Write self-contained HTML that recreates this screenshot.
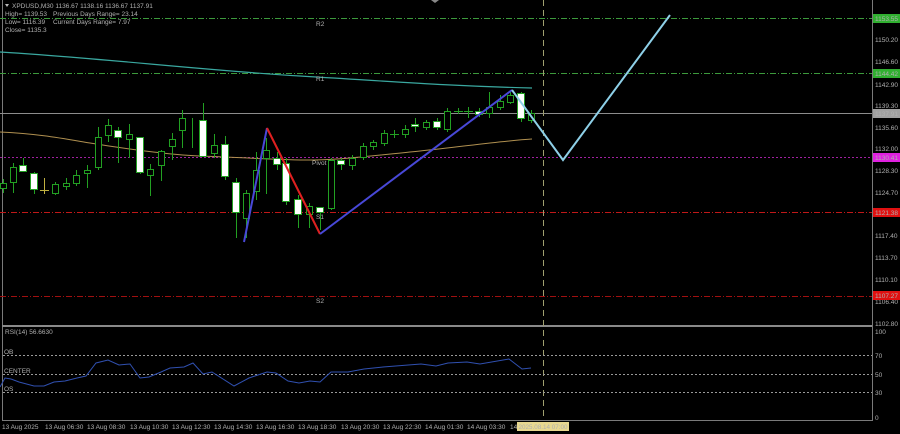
<!DOCTYPE html>
<html><head><meta charset="utf-8"><style>
html,body{margin:0;padding:0;background:#000;width:900px;height:434px;overflow:hidden}
svg{display:block}
text{font-family:"Liberation Sans",sans-serif;font-size:6.5px;fill:#b0b0b0}
</style></head><body>
<svg width="900" height="434" viewBox="0 0 900 434" xmlns="http://www.w3.org/2000/svg">
<rect width="900" height="434" fill="#000"/>
<path d="M2.5 0V420.5H872.5V0" fill="none" stroke="#7a7a7a" stroke-width="1"/>
<line x1="2" y1="326" x2="872" y2="326" stroke="#8a8a8a" stroke-width="2"/>
<line x1="0" y1="18.5" x2="872" y2="18.5" stroke="#3c9a3c" stroke-dasharray="6,2,1,2"/>
<line x1="0" y1="73.5" x2="872" y2="73.5" stroke="#3c9a3c" stroke-dasharray="6,2,1,2"/>
<line x1="0" y1="113.5" x2="872" y2="113.5" stroke="#8c8c8c"/>
<line x1="0" y1="157.5" x2="872" y2="157.5" stroke="#a020a0" stroke-dasharray="2,2"/>
<line x1="0" y1="212.5" x2="872" y2="212.5" stroke="#c01818" stroke-dasharray="6,2,1,2"/>
<line x1="0" y1="296.5" x2="872" y2="296.5" stroke="#a01010" stroke-dasharray="6,2,1,2"/>
<line x1="543.5" y1="0" x2="543.5" y2="420" stroke="#a0a070" stroke-dasharray="6,4"/>
<path d="M0 52 C100 58 200 70 300 76 S450 86 532 88" fill="none" stroke="#3aa8a0" stroke-width="1.2"/>
<path d="M0 132 C40 134 60 138 90 143 S170 155 200 156 S280 160 310 160 S380 155 420 151 S500 141 532 139" fill="none" stroke="#b09050" stroke-width="1"/>
<path stroke="#22a022" stroke-width="1" fill="none" d="M3.5 179V193M13.5 163V193M23.5 158V172M34.5 172V194M55.5 182V195M66.5 178V190M76.5 170V186M87.5 165V188M98.5 127V170M108.5 119V142M118.5 127V163M129.5 124V158M140.5 137V174M150.5 164V196M161.5 150V181M172.5 133V160M182.5 110V148M192.5 118V148M203.5 103V156M214.5 134V158M225.5 136V180M236.5 178V238M246.5 190V238M256.5 152V200M266.5 138V194M277.5 152V170M286.5 158V205M298.5 195V228M309.5 203V228M320.5 207V230M331.5 158V210M341.5 158V170M352.5 155V170M363.5 143V160M373.5 140V150M384.5 130V146M394.5 130V138M405.5 125V138M415.5 118V132M426.5 120V130M437.5 118V130M447.5 108V132M458.5 108V114M468.5 107V118M479.5 108V117M489.5 92V118M500.5 95V110M510.5 90V104M521.5 92V122M531.5 110V123"/>
<line x1="44.5" y1="178" x2="44.5" y2="194" stroke="#c0b040"/><line x1="40" y1="190.5" x2="49" y2="190.5" stroke="#c0b040"/>
<g fill="#000" stroke="#22a022" stroke-width="1">
<rect x="0.5" y="183.5" width="6" height="5"/><rect x="10.5" y="167.5" width="6" height="15"/><rect x="52.5" y="184.5" width="6" height="9"/><rect x="63.5" y="183.5" width="6" height="3"/><rect x="73.5" y="175.5" width="6" height="8"/><rect x="84.5" y="170.5" width="6" height="3"/><rect x="95.5" y="137.5" width="6" height="30"/><rect x="105.5" y="125.5" width="6" height="10"/><rect x="126.5" y="134.5" width="6" height="5"/><rect x="147.5" y="169.5" width="6" height="6"/><rect x="158.5" y="151.5" width="6" height="14"/><rect x="169.5" y="139.5" width="6" height="7"/><rect x="179.5" y="118.5" width="6" height="12"/><rect x="211.5" y="145.5" width="6" height="8"/><rect x="243.5" y="193.5" width="6" height="25"/><rect x="253.5" y="170.5" width="6" height="21"/><rect x="263.5" y="150.5" width="6" height="8"/><rect x="306.5" y="206.5" width="6" height="8"/><rect x="328.5" y="160.5" width="6" height="48"/><rect x="349.5" y="158.5" width="6" height="7"/><rect x="360.5" y="146.5" width="6" height="11"/><rect x="370.5" y="142.5" width="6" height="4"/><rect x="381.5" y="133.5" width="6" height="10"/><rect x="402.5" y="129.5" width="6" height="5"/><rect x="423.5" y="122.5" width="6" height="5"/><rect x="444.5" y="111.5" width="6" height="18"/><rect x="486.5" y="107.5" width="6" height="6"/><rect x="497.5" y="101.5" width="6" height="6"/><rect x="507.5" y="95.5" width="6" height="7"/><rect x="528.5" y="113.5" width="6" height="7"/>
</g>
<g fill="#fff" stroke="#22a022" stroke-width="1">
<rect x="19.5" y="165.5" width="7" height="6"/><rect x="30.5" y="173.5" width="7" height="16"/><rect x="114.5" y="130.5" width="7" height="7"/><rect x="136.5" y="137.5" width="7" height="35"/><rect x="199.5" y="120.5" width="7" height="36"/><rect x="221.5" y="144.5" width="7" height="32"/><rect x="232.5" y="182.5" width="7" height="30"/><rect x="273.5" y="158.5" width="7" height="6"/><rect x="282.5" y="163.5" width="7" height="38"/><rect x="294.5" y="199.5" width="7" height="15"/><rect x="316.5" y="207.5" width="7" height="5"/><rect x="337.5" y="160.5" width="7" height="4"/><rect x="411.5" y="124.5" width="7" height="2"/><rect x="433.5" y="121.5" width="7" height="6"/><rect x="475.5" y="111.5" width="7" height="3"/><rect x="517.5" y="93.5" width="7" height="25"/>
</g>
<g stroke="#22a022"><line x1="390" y1="134.5" x2="399" y2="134.5"/><line x1="454" y1="111.5" x2="463" y2="111.5"/><line x1="464" y1="111.5" x2="473" y2="111.5"/></g>
<polyline points="244,242 267,128" fill="none" stroke="#4848d8" stroke-width="2"/>
<polyline points="267,128 320,234" fill="none" stroke="#e02020" stroke-width="2"/>
<polyline points="320,234 512,90" fill="none" stroke="#4848d8" stroke-width="2"/>
<polyline points="512,90 563,160 670,15" fill="none" stroke="#8ed0e8" stroke-width="2"/>
<text x="316" y="26" fill="#ddd">R2</text><text x="316" y="81" fill="#ddd">R1</text><text x="312" y="165" fill="#ddd">Pivot</text><text x="316" y="219" fill="#ddd">S1</text><text x="316" y="303" fill="#ddd">S2</text>
<path d="M5 4L9 4L7 7Z" fill="#bbb"/>
<path d="M431 0L439 0L435 3Z" fill="#888"/>
<text x="12" y="8">XPDUSD,M30  1136.67 1138.16 1136.67 1137.91</text>
<text x="5" y="16">High= 1139.53</text><text x="53" y="16">Previous Days Range= 23.14</text>
<text x="5" y="24">Low= 1116.39</text><text x="53" y="24">Current Days Range= 7.97</text>
<text x="5" y="32">Close= 1135.3</text>
<g>
<text x="875" y="42">1150.20</text><text x="875" y="64">1146.60</text><text x="875" y="87">1142.90</text><text x="875" y="108">1139.30</text><text x="875" y="130">1135.60</text><text x="875" y="151">1132.00</text><text x="875" y="173">1128.30</text><text x="875" y="195">1124.70</text><text x="875" y="238">1117.40</text><text x="875" y="260">1113.70</text><text x="875" y="282">1110.10</text><text x="875" y="304">1106.40</text><text x="875" y="326">1102.80</text>
</g>
<rect x="873" y="14" width="27" height="9" fill="#30b030"/><text x="875" y="21" fill="#111">1153.55</text>
<rect x="873" y="69" width="27" height="9" fill="#30b030"/><text x="875" y="76" fill="#111">1144.42</text>
<rect x="873" y="109" width="27" height="9" fill="#a0a0a0"/><text x="875" y="116" fill="#111">1137.91</text>
<rect x="873" y="153" width="27" height="9" fill="#e020e0"/><text x="875" y="160" fill="#800080">1130.41</text>
<rect x="873" y="208" width="27" height="9" fill="#e01010"/><text x="875" y="215" fill="#800000">1121.38</text>
<rect x="873" y="291" width="27" height="9" fill="#e01010"/><text x="875" y="298" fill="#800000">1107.27</text>
<text x="5" y="334">RSI(14) 56.6630</text>
<g stroke="#9a9a9a" stroke-dasharray="2,2"><line x1="3" y1="355.5" x2="872" y2="355.5"/><line x1="3" y1="374.5" x2="872" y2="374.5"/><line x1="3" y1="392.5" x2="872" y2="392.5"/></g>
<text x="4" y="354">OB</text><text x="4" y="373">CENTER</text><text x="4" y="391">OS</text>
<text x="875" y="334">100</text><text x="875" y="358">70</text><text x="875" y="377">50</text><text x="875" y="395">30</text><text x="875" y="420">0</text>
<polyline fill="none" stroke="#3050b0" stroke-width="1" points="0,387 5,378 11,379 19,382 34,386 44,386 54,382 65,381 77,378 86,376 96,363 108,360 119,365 130,364 140,378 149,377 161,372 170,368 184,367 193,363 203,374 212,372 234,386 249,378 267,372 276,373 288,381 299,383 310,381 320,382 331,372 348,372 364,369 383,367 421,364 436,366 448,363 467,362 480,364 509,359 522,369 531,368"/>
<g><text x="2" y="429">13 Aug 2025</text><text x="45" y="429">13 Aug 06:30</text><text x="87" y="429">13 Aug 08:30</text><text x="130" y="429">13 Aug 10:30</text><text x="172" y="429">13 Aug 12:30</text><text x="214" y="429">13 Aug 14:30</text><text x="256" y="429">13 Aug 16:30</text><text x="298" y="429">13 Aug 18:30</text><text x="341" y="429">13 Aug 20:30</text><text x="383" y="429">13 Aug 22:30</text><text x="425" y="429">14 Aug 01:30</text><text x="467" y="429">14 Aug 03:30</text><text x="510" y="429">14</text></g>
<rect x="517" y="422" width="52" height="9" fill="#e8d890"/><text x="518.5" y="429" fill="#222" textLength="49" lengthAdjust="spacingAndGlyphs">2025.08.14 07:00</text>
</svg>
</body></html>
